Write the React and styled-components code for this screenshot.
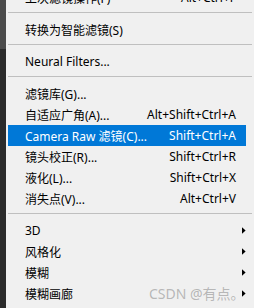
import React from 'react'
import styled, { createGlobalStyle } from 'styled-components'

const Global = createGlobalStyle`
  html, body {
    margin: 0;
    padding: 0;
    background: #f0f0f0;
  }
  body {
    font-family: "Noto Sans", "Noto Sans CJK SC", sans-serif;
  }
`

const groups = [
  [{ label: '上次滤镜操作(F)', shortcut: 'Alt+Ctrl+F' }],
  [{ label: '转换为智能滤镜(S)' }],
  [{ label: 'Neural Filters...' }],
  [
    { label: '滤镜库(G)...' },
    { label: '自适应广角(A)...', shortcut: 'Alt+Shift+Ctrl+A' },
    { label: 'Camera Raw 滤镜(C)...', shortcut: 'Shift+Ctrl+A', active: true },
    { label: '镜头校正(R)...', shortcut: 'Shift+Ctrl+R' },
    { label: '液化(L)...', shortcut: 'Shift+Ctrl+X' },
    { label: '消失点(V)...', shortcut: 'Alt+Ctrl+V' },
  ],
  [
    { label: '3D', sub: true },
    { label: '风格化', sub: true },
    { label: '模糊', sub: true },
    { label: '模糊画廊', sub: true },
  ],
]

const Arrow = () => (
  <svg width="5" height="9" viewBox="0 0 5 9">
    <polygon points="0,0.5 4.5,4.5 0,8.5" fill="#000" />
  </svg>
)

const App = () => {
  return (
    <Page>
      <Global />
      <Edge />
      <Menu>
        <List>
          {groups.map((group, gi) => (
            <React.Fragment key={gi}>
              {gi > 0 && <Separator />}
              {group.map(item => (
                <Item key={item.label} $active={item.active}>
                  <Label>{item.label}</Label>
                  <Shortcut>{item.shortcut}</Shortcut>
                  <SubCell>{item.sub && <Arrow />}</SubCell>
                </Item>
              ))}
            </React.Fragment>
          ))}
        </List>
        <Watermark>CSDN @有点。</Watermark>
      </Menu>
    </Page>
  )
}

const Page = styled.div`
  width: 254px;
  height: 308px;
  display: flex;
  overflow: hidden;
`

const Edge = styled.div`
  width: 6px;
  flex-shrink: 0;
  background: linear-gradient(#4b4b4b 0, #4b4b4b 49px, #2b2b2b 49px);
`

const Menu = styled.div`
  position: relative;
  flex: 1;
  background: #f0f0f0;
  overflow: hidden;
`

const List = styled.div`
  display: flex;
  flex-direction: column;
  margin-top: -13px;
`

const Item = styled.div`
  height: 21px;
  margin: 0 8px 0 2px;
  padding-left: 17px;
  display: grid;
  grid-template-columns: 1fr auto 10px;
  align-items: center;
  font-size: 12px;
  white-space: nowrap;
  color: ${p => (p.$active ? '#fff' : '#000')};
  background: ${p => (p.$active ? '#0078d7' : 'transparent')};
`

const Label = styled.span``

const Shortcut = styled.span`
  text-align: right;
`

const SubCell = styled.span`
  display: flex;
  align-items: center;
  padding-left: 6px;
`

const Separator = styled.div`
  height: 1px;
  margin: 4px 2px 6px 2px;
  background: #bfbfbf;
`

const Watermark = styled.div`
  position: absolute;
  left: 143px;
  top: 283px;
  font-size: 14px;
  color: rgba(150, 150, 150, 0.65);
  white-space: nowrap;
  pointer-events: none;
`

export default App
